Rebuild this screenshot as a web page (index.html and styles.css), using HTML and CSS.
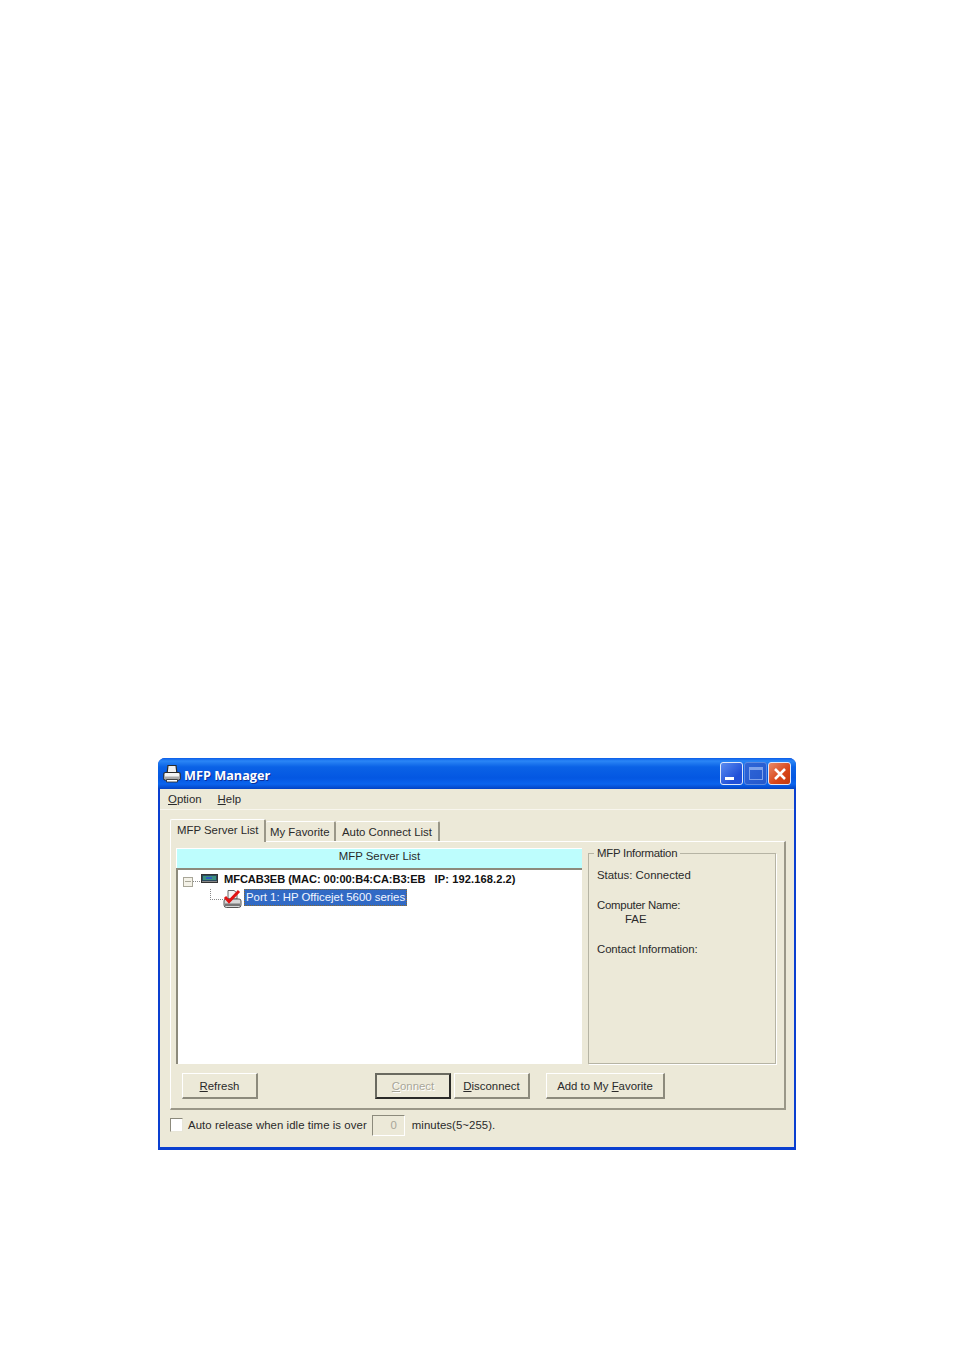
FILE: index.html
```html
<!DOCTYPE html>
<html lang="en">
<head>
<meta charset="utf-8">
<title>MFP Manager</title>
<link rel="stylesheet" href="styles.css">
</head>
<body>
<div class="window">
  <div class="titlebar">
    <svg class="app-icon" width="18" height="18" viewBox="0 0 18 18"><path d="M5 .5h8l.8 7H4.200z" fill="#f0f0f0" stroke="#2a2a2a" stroke-width="1.200"/><path d="M.8 9Q.8 7.500 2.500 7.500h13q1.700 0 1.700 1.500v4.500q0 1.500-1.700 1.500h-13Q.8 15 .8 13.500z" fill="#f4f4f4" stroke="#2a2a2a" stroke-width="1.200"/><path d="M1.500 11.500h15V14h-15z" fill="#a9a9a9"/><path d="M3.500 14.500h11v2.500h-11z" fill="#fff" stroke="#333" stroke-width=".9"/></svg>
    <span class="title-text">MFP Manager</span>
    <div class="caption-btns">
      <div class="cap cap-min"><span class="min-bar"></span></div>
      <div class="cap cap-max"><span class="max-box"></span></div>
      <div class="cap cap-close"><svg width="16" height="16" viewBox="0 0 16 16"><path d="M3 3l10 10M13 3L3 13" stroke="#fff" stroke-width="2.600"/></svg></div>
    </div>
  </div>
  <div class="client">
    <div class="menubar">
      <span class="menu-item"><u>O</u>ption</span>
      <span class="menu-item"><u>H</u>elp</span>
    </div>
    <div class="tabs">
      <div class="tab tab-active">MFP Server List</div>
      <div class="tab tab-2">My Favorite</div>
      <div class="tab tab-3">Auto Connect List</div>
    </div>
    <div class="panel">
      <div class="panel-top">
        <div class="list-col">
          <div class="list-head">MFP Server List</div>
          <div class="tree">
            <div class="tree-row tree-root">
              <span class="expander"></span>
              <span class="dots-h"></span>
              <svg class="srv-icon" width="17" height="9" viewBox="0 0 17 9"><rect x=".5" y=".5" width="16" height="8" fill="#2b4a5e" stroke="#333"/><rect x="2" y="2" width="13" height="4" fill="#3a8f7e"/><rect x="5" y="3" width="6" height="2" fill="#2d5fc0"/><rect x="1" y="7" width="15" height="1" fill="#888"/></svg>
              <span class="srv-name">MFCAB3EB (MAC: 00:00:B4:CA:B3:EB</span>
              <span class="srv-ip">IP: 192.168.2.2)</span>
            </div>
            <div class="tree-row tree-child">
              <span class="dots-elbow"></span>
              <svg class="port-icon" width="19" height="19" viewBox="0 0 19 19"><path d="M5 1.500h6l3 2.500v6H5z" fill="#f4f4f4" stroke="#555" stroke-width=".9"/><path d="M1 12q0-2 2-2h13q2 0 2 2v4q0 2.500-2.500 2.500h-12Q1 18.500 1 16z" fill="#d8d8d8" stroke="#444" stroke-width=".9"/><path d="M2 14.500h15V17H2z" fill="#777"/><path d="M2 8l4 4.500L16 2" fill="none" stroke="#e01414" stroke-width="3"/></svg>
              <span class="port-label">Port 1: HP Officejet 5600 series</span>
            </div>
          </div>
        </div>
        <div class="group">
          <span class="group-title">MFP Information</span>
          <div class="info-status">Status: Connected</div>
          <div class="info-name">Computer Name:</div>
          <div class="info-fae">FAE</div>
          <div class="info-contact">Contact Information:</div>
        </div>
      </div>
      <div class="buttons">
        <div class="btn btn-refresh"><span><u>R</u>efresh</span></div>
        <div class="btn btn-connect"><span><u>C</u>onnect</span></div>
        <div class="btn btn-disconnect"><span><u>D</u>isconnect</span></div>
        <div class="btn btn-fav"><span>Add to My <u>F</u>avorite</span></div>
      </div>
    </div>
    <div class="autorow">
      <span class="check"></span>
      <span class="auto-text">Auto release when idle time is over</span>
      <span class="num">0</span>
      <span class="auto-text">minutes(5~255).</span>
    </div>
  </div>
</div>
</body>
</html>
```
FILE: styles.css
```css
* { box-sizing: border-box; }
html, body { margin: 0; background: #fff; }
body {
  width: 954px;
  height: 1350px;
  padding: 758px 0 0 158px;
  font-family: "Liberation Sans", Arial, sans-serif;
  font-size: 11.4px;
  color: #2a2a2a;
  overflow: hidden;
}
u { text-decoration-thickness: 1px; text-underline-offset: 1px; }
.window {
  width: 638px;
  height: 392px;
  display: flex;
  flex-direction: column;
  background: #0a3fd0;
  border-radius: 7px 7px 0 0;
  overflow: hidden;
}
.titlebar {
  height: 31px;
  flex: none;
  display: flex;
  align-items: center;
  padding: 0 5px 0 5px;
  background: linear-gradient(#0a5ce8 0, #2a86f6 3px, #0a62e6 9px, #0457e2 20px, #0a64ee 26px, #0343c4 31px);
}
.app-icon { flex: none; }
.title-text {
  margin: 3px 0 0 3px;
  font-family: "Open Sans", sans-serif;
  font-size: 12.7px;
  font-weight: 700;
  color: #fff;
  text-shadow: 1px 1px 0 #0a2f9a;
}
.caption-btns { margin-left: auto; display: flex; gap: 1px; }
.cap {
  width: 23px;
  height: 23px;
  border: 1px solid #dfe8fa;
  border-radius: 3px;
  display: flex;
  align-items: center;
  justify-content: center;
}
.cap-min { background: linear-gradient(135deg, #5a8cf0, #2150d8 70%); }
.cap-max { background: linear-gradient(135deg, #2f66d8, #2458cc); border-color: #5f8be0; }
.cap-close { background: linear-gradient(135deg, #ea8a68, #d84518 60%, #c23a10); }
.min-bar { width: 9px; height: 3px; background: #fff; margin: 10px 5px 0 0; }
.max-box { width: 14px; height: 13px; border: 1px solid #7ea2ea; border-top-width: 3px; }
.client {
  flex: 1;
  margin: 0 2px 3px;
  background: #ece9d8;
  display: flex;
  flex-direction: column;
}
.menubar {
  height: 21px;
  flex: none;
  display: flex;
  align-items: center;
  padding: 0 0 0 8px;
  gap: 16px;
  border-bottom: 1px solid #f8f6ee;
}
.tabs {
  height: 31px;
  flex: none;
  display: flex;
  align-items: flex-end;
  padding-left: 10px;
}
.tab {
  height: 20px;
  padding: 4px 0 0 4px;
  border-top: 1px solid #fff;
  border-right: 2px solid #9a9788;
  white-space: nowrap;
  border-radius: 2px 2px 0 0;
}
.tab-2 { width: 70px; }
.tab-3 { width: 104px; padding-left: 6px; }
.tab-active {
  height: 23px;
  margin-bottom: -1px;
  padding: 4px 0 0 6px;
  border-left: 1px solid #fff;
  position: relative;
  background: #ece9d8;
  z-index: 1;
  width: 96px;
}
.panel {
  width: 616px;
  height: 269px;
  margin-left: 10px;
  flex: none;
  border-top: 1px solid #fff;
  border-left: 1px solid #fff;
  border-right: 2px solid #9a9788;
  border-bottom: 2px solid #9a9788;
  padding: 6px 9px 0 5px;
}
.panel-top { display: flex; height: 216px; }
.list-col { width: 406px; flex: none; display: flex; flex-direction: column; }
.list-head {
  height: 20px;
  flex: none;
  background: #bdfdfd;
  border-left: 1px solid #fff;
  border-top: 1px solid #fff;
  text-align: center;
  line-height: 14px;
}
.tree {
  flex: 1;
  background: #fff;
  border-top: 2px solid #8c8a7c;
  border-left: 2px solid #8c8a7c;
  padding: 0 0 0 5px;
}
.tree-row { display: flex; align-items: center; }
.tree-root { height: 17px; }
.expander {
  width: 10px;
  height: 10px;
  border: 1px solid #a8a698;
  background: linear-gradient(#a8a698, #a8a698) center / 6px 1px no-repeat, #f4f2e8;
  margin-top: 6px;
  flex: none;
}
.dots-h { width: 7px; border-top: 1px dotted #888; margin-top: 6px; flex: none; }
.srv-icon { margin-left: 1px; flex: none; }
.srv-name, .srv-ip {
  font-weight: 700;
  font-size: 11.1px;
  color: #111;
  white-space: nowrap;
}
.srv-name { margin-left: 6px; letter-spacing: -0.06px; }
.srv-ip { margin-left: 9px; letter-spacing: 0.1px; }
.tree-child { height: 20px; padding-left: 27px; }
.dots-elbow {
  width: 13px;
  height: 11px;
  border-left: 1px dotted #888;
  border-bottom: 1px dotted #888;
  margin-top: -5px;
  flex: none;
}
.port-icon { flex: none; margin-top: 2px; }
.port-label {
  margin-left: 2px;
  height: 17px;
  line-height: 16px;
  padding: 0 2px;
  background: #316ac5;
  color: #f2f6ff;
  white-space: nowrap;
  outline: 1px dotted #8a6a2c;
  outline-offset: -1px;
}
.group {
  width: 188px;
  flex: none;
  height: 211px;
  margin: 5px 0 0 6px;
  border: 1px solid #b6b4a4;
  box-shadow: 1px 1px 0 #fff;
  padding: 14px 0 0 8px;
  position: relative;
}
.group-title {
  position: absolute;
  top: -7px;
  left: 5px;
  padding: 0 3px;
  background: #ece9d8;
  line-height: 13px;
  letter-spacing: -0.25px;
}
.info-status { line-height: 14px; }
.info-name { line-height: 14px; margin-top: 16px; letter-spacing: -0.25px; }
.info-fae { line-height: 14px; margin: 0 0 0 28px; }
.info-contact { line-height: 14px; margin-top: 16px; letter-spacing: -0.1px; }
.buttons { display: flex; margin-top: 9px; padding-left: 6px; }
.btn {
  height: 26px;
  display: flex;
  align-items: center;
  justify-content: center;
  border-top: 1px solid #fff;
  border-left: 1px solid #fff;
  border-right: 2px solid #8c8a7c;
  border-bottom: 2px solid #8c8a7c;
  white-space: nowrap;
}
.btn-refresh { width: 76px; }
.btn-connect {
  width: 76px;
  margin-left: 117px;
  border: 2px solid #2a2a28;
  border-top-color: #6a6a60;
  border-left-color: #6a6a60;
  color: #a8a698;
  text-shadow: 1px 1px 0 #fff;
}
.btn-disconnect { width: 76px; margin-left: 3px; }
.btn-fav { width: 119px; margin-left: 16px; }
.autorow {
  flex: 1;
  display: flex;
  align-items: center;
  padding: 0 0 7px 10px;
}
.check {
  width: 13px;
  height: 14px;
  background: #fff;
  border-top: 1px solid #8c8a7c;
  border-left: 1px solid #8c8a7c;
  border-right: 1px solid #e8e6d8;
  border-bottom: 1px solid #e8e6d8;
  flex: none;
  margin-right: 5px;
}
.auto-text { white-space: nowrap; letter-spacing: 0.06px; }
.num {
  width: 33px;
  height: 21px;
  margin: 0 7px 0 5px;
  padding-right: 7px;
  border-top: 1px solid #8c8a7c;
  border-left: 1px solid #8c8a7c;
  border-right: 1px solid #fff;
  border-bottom: 1px solid #fff;
  color: #a8a698;
  text-align: right;
  line-height: 19px;
}
```
